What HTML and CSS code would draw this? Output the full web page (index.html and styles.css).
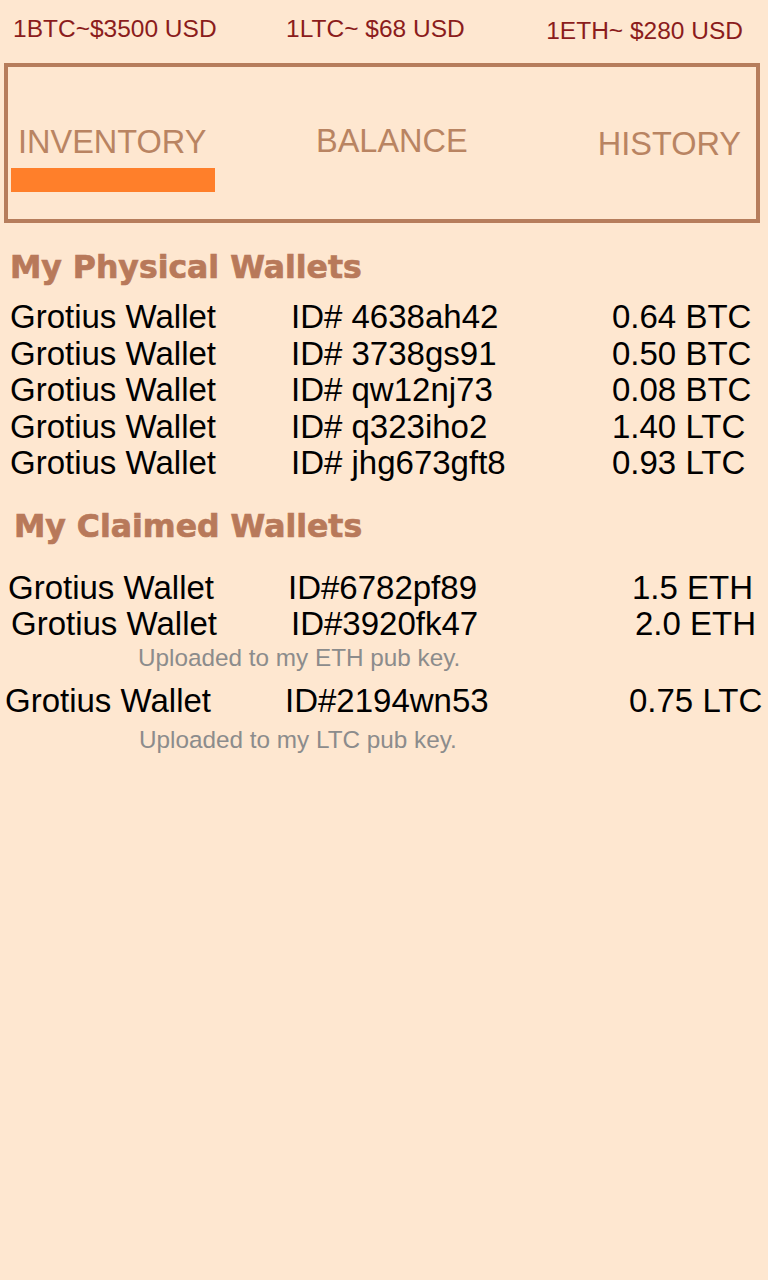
FILE: index.html
```html
<!DOCTYPE html>
<html lang="en">
<head>
  <meta charset="UTF-8" />
  <title>Grotius Wallets</title>
  <meta name="viewport" content="width=device-width, initial-scale=1">
  <link rel="stylesheet" href="styles.css">
</head>
<body>
  <div class="prices">
    <span>1BTC~$3500 USD</span>
    <span>1LTC~ $68 USD</span>
    <span class="eth">1ETH~ $280 USD</span>
  </div>

  <nav class="tabs">
    <div class="tab active">INVENTORY</div>
    <div class="tab balance">BALANCE</div>
    <div class="tab history">HISTORY</div>
  </nav>

  <h2 class="section">My Physical Wallets</h2>
  <div class="wallets physical">
    <div class="row"><span>Grotius Wallet</span><span>ID# 4638ah42</span><span>0.64 BTC</span></div>
    <div class="row"><span>Grotius Wallet</span><span>ID# 3738gs91</span><span>0.50 BTC</span></div>
    <div class="row"><span>Grotius Wallet</span><span>ID# qw12nj73</span><span>0.08 BTC</span></div>
    <div class="row"><span>Grotius Wallet</span><span>ID# q323iho2</span><span>1.40 LTC</span></div>
    <div class="row"><span>Grotius Wallet</span><span>ID# jhg673gft8</span><span>0.93 LTC</span></div>
  </div>

  <h2 class="section claimed-title">My Claimed Wallets</h2>
  <div class="wallets claimed">
    <div class="row"><span>Grotius Wallet</span><span>ID#6782pf89</span><span>1.5 ETH</span></div>
    <div class="row nudge"><span>Grotius Wallet</span><span>ID#3920fk47</span><span>2.0 ETH</span></div>
    <div class="note">Uploaded to my ETH pub key.</div>
  </div>
  <div class="wallets claimed last">
    <div class="row"><span>Grotius Wallet</span><span>ID#2194wn53</span><span>0.75 LTC</span></div>
    <div class="note">Uploaded to my LTC pub key.</div>
  </div>
</body>
</html>
```

FILE: styles.css
```css
body {
  margin: 0;
  font-family: "Liberation Sans", Arial, sans-serif;
  background: #fee7d0;
  color: #000;
}

.prices {
  display: flex;
  justify-content: space-between;
  padding: 15px 25px 0 13px;
  font-size: 24.5px;
  line-height: 28px;
  color: #8b1c1c;
}

.prices span:nth-child(2) {
  margin-left: -12px;
}

.prices .eth {
  margin-top: 2px;
}

.tabs {
  display: flex;
  align-items: flex-start;
  margin: 18px 8px 0 4px;
  padding: 59px 15px 27px 3px;
  border: 4px solid #b67d5c;
  font-size: 32.5px;
  line-height: 32px;
  color: #b98462;
}

.tab.active {
  width: 197px;
  padding-left: 7px;
}

.tab.active::after {
  content: "";
  display: block;
  height: 24px;
  margin: 10px 0 0 -7px;
  background: #ff7f2a;
}

.tab.balance {
  margin-left: 101px;
  margin-top: -1px;
}

.tab.history {
  margin-left: auto;
  margin-top: 2px;
}

.section {
  margin: 26px 0 0 10px;
  font-family: "DejaVu Sans", sans-serif;
  font-weight: bold;
  font-size: 31.5px;
  line-height: 36px;
  color: #b8795a;
  -webkit-text-stroke: 0.7px #b8795a;
}

.wallets {
  font-size: 33px;
  line-height: 36.5px;
}

.row {
  display: grid;
  grid-template-columns: 281px 321px 1fr;
}

.physical {
  margin-top: 14px;
  padding-left: 10px;
}

.claimed-title {
  margin: 26px 0 0 14px;
}

.claimed {
  margin-top: 26px;
  padding-left: 8px;
}

.claimed .row {
  grid-template-columns: 280px 344px 1fr;
}

.claimed .nudge {
  padding-left: 3px;
}

.claimed.last {
  margin-top: 11px;
  padding-left: 5px;
}

.note {
  margin-top: 1px;
  padding-left: 130px;
  font-size: 24.3px;
  line-height: 28px;
  color: #8c8c8c;
}

.last .note {
  margin-top: 7px;
  padding-left: 134px;
}
```
